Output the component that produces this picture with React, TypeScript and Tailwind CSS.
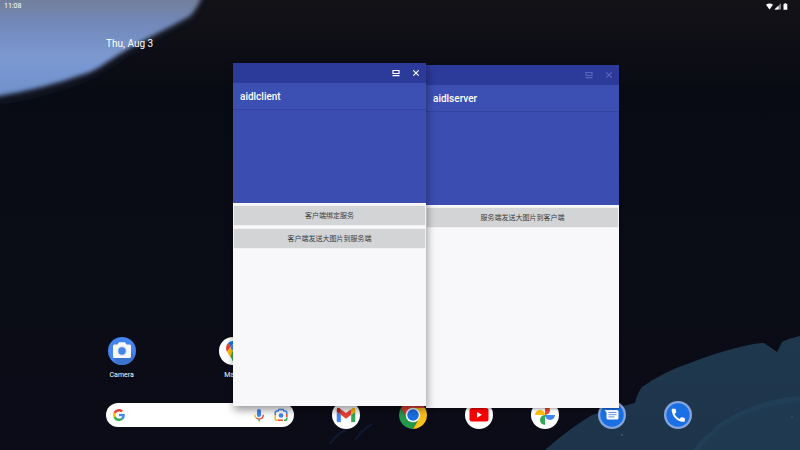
import type { ReactNode } from "react";

function Wallpaper() {
  return (
    <svg
      className="absolute inset-0 h-full w-full"
      viewBox="0 0 800 450"
      preserveAspectRatio="xMidYMid slice"
      aria-hidden="true"
    >
      <defs>
        <linearGradient id="night" x1="0" y1="0" x2="0" y2="1">
          <stop offset="0" stopColor="#131217" />
          <stop offset="0.2" stopColor="#090b14" />
          <stop offset="1" stopColor="#0b0c17" />
        </linearGradient>
        <linearGradient id="petal" x1="0" y1="0" x2="0" y2="1">
          <stop offset="0.1" stopColor="#727c90" />
          <stop offset="0.35" stopColor="#7288b8" />
          <stop offset="0.65" stopColor="#7c99d2" />
          <stop offset="1" stopColor="#6f90cc" />
        </linearGradient>
        <linearGradient id="leaf" x1="0" y1="0" x2="0" y2="1">
          <stop offset="0" stopColor="#20384e" />
          <stop offset="1" stopColor="#1d344a" />
        </linearGradient>
        <filter id="soft" x="-20%" y="-20%" width="140%" height="140%">
          <feGaussianBlur stdDeviation="2" />
        </filter>
        <filter id="wide" x="-20%" y="-20%" width="140%" height="140%">
          <feGaussianBlur stdDeviation="5" />
        </filter>
      </defs>
      <rect width="800" height="450" fill="url(#night)" />
      <path
        d="M-20-20H207Q202 4 190 18Q152 38 127 52Q95 76 60 86Q25 98-20 102Z"
        fill="#1a2233"
        filter="url(#wide)"
      />
      <path
        d="M-20-20H207Q202 3 190 16Q172 26 154 35Q128 48 107 62Q93 72 84 74Q40 90-20 99Z"
        fill="url(#petal)"
        filter="url(#soft)"
      />
      <path
        d="M545 450Q570 428 592 415Q615 408 635 403Q637 394 642 387Q665 371 690 363Q715 353 740 347Q756 343 764 343L777 352L782 342Q790 338 800 336V450Z"
        fill="url(#leaf)"
      />
      <path
        d="M693 450Q700 440 708 434Q722 419 742 411Q765 399 800 396V450Z"
        fill="#203f56"
      />
      <path d="M700 450Q709 434 730 422Q760 405 800 402V450Z" fill="#1f3a50" />
      <path d="M330 444Q336 434 346 430M355 440Q362 430 372 424" stroke="#0f1930" strokeWidth="2" fill="none" />
      <circle cx="622" cy="435" r="1" fill="#34607c" />
      <circle cx="792" cy="417" r="1" fill="#2a4d66" />
    </svg>
  );
}

function StatusBar() {
  return (
    <header className="flex h-3 items-center justify-between pl-1 pr-3 text-[7px] leading-3 text-white">
      <time>11:08</time>
      <svg className="h-[7px] w-[22px]" viewBox="0 0 22 7" fill="#fff" aria-label="Wi-Fi, signal, battery">
        <path d="M0 1.800Q3.500-.8 7 1.800L3.500 6.600Z" />
        <path d="M15 .3V6.600H8.400Z" fillOpacity="0.5" />
        <path d="M12.500 2.800V6.600H8.400Z" />
        <path d="M17.500 .9h1V.2h1.800v.7h1v5.800h-3.800Z" />
      </svg>
    </header>
  );
}

function CameraIcon() {
  return (
    <svg className="h-7 w-7" viewBox="0 0 28 28" aria-hidden="true">
      <circle cx="14" cy="14" r="14" fill="#4384ee" />
      <path d="M6 21L9 27Q14 29 19 27Q24 25 26.500 20L23 14Z" fill="#3a73d0" />
      <path
        d="M6.500 7.500H9.500L11 5.300H17L18.500 7.500H21.500Q23 7.500 23 9V19.500Q23 21 21.500 21H6.500Q5 21 5 19.500V9Q5 7.500 6.500 7.500Z"
        fill="#f7f7f7"
      />
      <circle cx="14" cy="14" r="5" fill="#dfe3ea" />
      <circle cx="14" cy="14" r="3.700" fill="#4384ee" />
    </svg>
  );
}

function MapsIcon() {
  return (
    <svg className="h-7 w-7" viewBox="0 0 28 28" aria-hidden="true">
      <circle cx="14" cy="14" r="14" fill="#fff" />
      <path d="M14 4Q10.800 4 8.800 6.300L12 9.500L16 4.300Q15 4 14 4Z" fill="#1a73e8" />
      <path d="M8.800 6.300Q7 8.200 7 11Q7 13 8 14.700L12 9.500Z" fill="#ea4335" />
      <path d="M16 4.300L11.500 10Q12 13.500 14 13.500L19.500 7Q18 5 16 4.300Z" fill="#4285f4" />
      <path d="M8 14.700Q9.500 17.500 11.500 20L21 11Q21 8.500 19.500 7L14 13.500Q11.500 13.300 11.500 10.500Z" fill="#fbbc04" />
      <path d="M11.500 19.500Q12.800 21.500 13.200 23.500Q14 25 14.800 23.500Q15.500 21 17.500 18.500Q21 14.500 21 11L14 13.500Z" fill="#34a853" />
    </svg>
  );
}

function GmailIcon() {
  return (
    <svg className="h-7 w-7" viewBox="0 0 28 28" aria-hidden="true">
      <circle cx="14" cy="14" r="14" fill="#fff" />
      <svg x="4.500" y="6.500" width="19" height="15" viewBox="52 42 88 66">
        <path fill="#4285f4" d="M58 108h14V74L52 59v43c0 3.320 2.690 6 6 6" />
        <path fill="#34a853" d="M120 108h14c3.320 0 6-2.690 6-6V59l-20 15" />
        <path fill="#fbbc04" d="M120 48v26l20-15v-8c0-7.420-8.470-11.650-14.400-7.200" />
        <path fill="#ea4335" d="M72 74V48l24 18 24-18v26L96 92" />
        <path fill="#c5221f" d="M52 51v8l20 15V48l-5.600-4.200c-5.940-4.450-14.400-.22-14.400 7.200" />
      </svg>
    </svg>
  );
}

function ChromeIcon() {
  return (
    <svg className="h-7 w-7" viewBox="0 0 48 48" aria-hidden="true">
      <path d="M3.220 12A24 24 0 0 1 44.780 12H24A12 12 0 0 0 13.610 30Z" fill="#dd4335" />
      <path d="M3.220 12L13.610 30A12 12 0 0 0 34.390 30L24 48A24 24 0 0 1 3.220 12Z" fill="#239a4b" />
      <path d="M44.780 12H24A12 12 0 0 1 34.390 30L24 48A24 24 0 0 0 44.780 12Z" fill="#fbc116" />
      <circle cx="24" cy="24" r="12.500" fill="#fff" />
      <circle cx="24" cy="24" r="10" fill="#1a6fe6" />
    </svg>
  );
}

function YouTubeIcon() {
  return (
    <svg className="h-7 w-7" viewBox="0 0 28 28" aria-hidden="true">
      <circle cx="14" cy="14" r="14" fill="#fff" />
      <rect x="4.500" y="7" width="19" height="13.500" rx="2.500" fill="#f60002" />
      <path d="M12 10.900V16.700L17 13.800Z" fill="#fff" />
    </svg>
  );
}

function PhotosIcon() {
  return (
    <svg className="h-7 w-7" viewBox="0 0 28 28" aria-hidden="true">
      <circle cx="14" cy="14" r="14" fill="#fff" />
      <path d="M14 14V4A5 5 0 0 1 14 14Z" fill="#ea4335" />
      <path d="M14 14H4A5 5 0 0 1 14 14Z" fill="#fbbc04" />
      <path d="M14 14H24A5 5 0 0 1 14 14Z" fill="#4285f4" />
      <path d="M14 14V24A5 5 0 0 1 14 14Z" fill="#34a853" />
    </svg>
  );
}

function MessagesIcon() {
  return (
    <svg className="h-7 w-7" viewBox="0 0 28 28" aria-hidden="true">
      <circle cx="14" cy="14" r="14" fill="#85a4dc" />
      <circle cx="14" cy="14" r="11.700" fill="#1a6fe4" />
      <path d="M6.500 9H19Q20.500 9 20.500 10.500V17Q20.500 18.500 19 18.500H10Q8.500 18.500 8.500 17V11.500Z" fill="#fff" />
      <path d="M10.500 11.500H18.500M10.500 13.700H18.500M10.500 15.900H16.500" stroke="#5b93ea" strokeWidth="1" />
    </svg>
  );
}

function PhoneIcon() {
  return (
    <svg className="h-7 w-7" viewBox="0 0 28 28" aria-hidden="true">
      <circle cx="14" cy="14" r="14" fill="#85a4dc" />
      <circle cx="14" cy="14" r="11.700" fill="#1a6fe4" />
      <svg x="5.500" y="5.500" width="17.500" height="17.500" viewBox="0 0 24 24">
        <path
          fill="#fff"
          d="M20.010 15.380c-1.230 0-2.420-.2-3.530-.56-.35-.12-.74-.03-1.010.24l-1.570 1.970c-2.830-1.350-5.480-3.900-6.890-6.830l1.950-1.660c.27-.28.35-.67.24-1.020-.37-1.110-.56-2.300-.56-3.530 0-.54-.45-.99-.99-.99H4.190C3.650 3 3 3.240 3 3.990 3 13.280 10.730 21 20.010 21c.71 0 .99-.63.99-1.180v-3.450c0-.54-.45-.99-.99-.99z"
        />
      </svg>
    </svg>
  );
}

function GoogleLogo() {
  return (
    <svg className="h-3 w-3 shrink-0" viewBox="0 0 48 48" aria-hidden="true">
      <path fill="#EA4335" d="M24 9.500c3.540 0 6.710 1.220 9.210 3.600l6.850-6.850C35.900 2.380 30.470 0 24 0 14.620 0 6.510 5.380 2.560 13.220l7.980 6.190C12.430 13.720 17.740 9.500 24 9.500z" />
      <path fill="#4285F4" d="M46.980 24.550c0-1.570-.15-3.090-.38-4.550H24v9.020h12.940c-.58 2.960-2.260 5.480-4.780 7.180l7.730 6c4.510-4.180 7.090-10.360 7.090-17.650z" />
      <path fill="#FBBC05" d="M10.530 28.590c-.48-1.450-.76-2.990-.76-4.590s.27-3.140.76-4.590l-7.980-6.190C.92 16.460 0 20.120 0 24c0 3.880.92 7.540 2.560 10.780l7.970-6.190z" />
      <path fill="#34A853" d="M24 48c6.480 0 11.930-2.130 15.890-5.810l-7.730-6c-2.150 1.450-4.920 2.300-8.160 2.300-6.260 0-11.570-4.220-13.470-9.910l-7.980 6.190C6.510 42.620 14.620 48 24 48z" />
    </svg>
  );
}

function SearchBar() {
  return (
    <form className="flex h-6 w-[188px] items-center rounded-full bg-white pl-[7px] pr-[6px]">
      <GoogleLogo />
      <input type="search" aria-label="Search" className="ml-1 min-w-0 flex-1 bg-transparent text-[8px] text-gray-800 outline-none" />
      <button type="button" aria-label="Voice search">
        <svg className="h-[14px] w-[14px]" viewBox="0 0 14 14" fill="none" aria-hidden="true">
          <rect x="5" y="1" width="4" height="8" rx="2" fill="#4285f4" />
          <path d="M2.900 6.800Q3 9 4.400 10.100" stroke="#fbbc04" strokeWidth="1.300" />
          <path d="M4.400 10.100Q5.700 11.100 7.100 11.100Q11.100 11 11.300 6.800" stroke="#ea4335" strokeWidth="1.300" />
          <path d="M7.100 11V13.400" stroke="#34a853" strokeWidth="1.300" />
        </svg>
      </button>
      <button type="button" aria-label="Lens" className="ml-2">
        <svg className="h-[14px] w-[14px]" viewBox="0 0 14 14" fill="none" strokeWidth="1.500" aria-hidden="true">
          <path d="M1.200 6.500V10.400Q1.200 12.200 3 12.200H4" stroke="#fbbc04" />
          <path d="M4 12.200H9" stroke="#ea4335" />
          <path d="M1.200 7V4.800Q1.200 3 3 3H4L5 1.400H9L10 3H11Q12.800 3 12.800 4.800V6" stroke="#4285f4" />
          <path d="M12.800 6V9" stroke="#ea4335" />
          <path d="M12.800 9.500V10.400Q12.800 12.200 11 12.200H10" stroke="#34a853" />
          <circle cx="7" cy="7.500" r="2.300" fill="#4285f4" />
        </svg>
      </button>
    </form>
  );
}

function AppShortcut({ label, children }: { label: string; children: ReactNode }) {
  return (
    <button type="button" className="flex flex-col items-center gap-[5px] text-[7px] leading-[10px] text-white">
      {children}
      {label}
    </button>
  );
}

function DockApp({ label, children }: { label: string; children: ReactNode }) {
  return (
    <button type="button" aria-label={label} className="h-7 w-7 rounded-full">
      {children}
    </button>
  );
}

type AppWindowProps = {
  title: string;
  actions: string[];
  active?: boolean;
  className: string;
};

function AppWindow({ title, actions, active = false, className }: AppWindowProps) {
  return (
    <section aria-label={title} className={`absolute flex h-[343px] w-[193px] flex-col bg-[#f8f7f9] ${className}`}>
      <div
        className={`flex h-5 shrink-0 items-center justify-end gap-3 bg-[#2c3a9a] pr-[6px] ${active ? "text-white" : "text-[#5965b8]"}`}
      >
        <button type="button" aria-label={`Minimize ${title}`}>
          <svg className="h-2 w-2" viewBox="0 0 8 8" fill="none" stroke="currentColor" aria-hidden="true">
            <path d="M1 1.500H7V4.500H1ZM.5 6.700H7.500" strokeWidth="1.200" />
          </svg>
        </button>
        <button type="button" aria-label={`Close ${title}`}>
          <svg className="h-2 w-2" viewBox="0 0 8 8" fill="none" stroke="currentColor" strokeWidth="1.200" aria-hidden="true">
            <path d="M1.300 1.300L6.700 6.700M6.700 1.300L1.300 6.700" />
          </svg>
        </button>
      </div>
      <h2 className="flex h-[27px] shrink-0 items-center border-b border-[#3343a0] bg-[#3c4fb2] px-[7px] pt-[2px] text-[10px] font-medium leading-3 text-white">
        {title}
      </h2>
      <div className="h-[93px] shrink-0 bg-[#3b4db0]" />
      <div className="flex flex-col gap-1 px-px pt-[3px]">
        {actions.map((action) => (
          <button
            key={action}
            type="button"
            className="h-[19px] rounded-[1px] bg-[#d3d4d6] pt-px text-[7px] text-[#3c3c3c] shadow-[0_0_1px_#b8b8b8]"
          >
            {action}
          </button>
        ))}
      </div>
    </section>
  );
}

export default function App() {
  return (
    <div className="relative flex min-h-screen flex-col overflow-hidden bg-[#0a0b15] font-[Roboto,'Noto_Sans_CJK_SC',sans-serif]">
      <Wallpaper />
      <div className="relative flex flex-1 flex-col">
        <StatusBar />
        <p className="mt-[26px] px-[106px] text-[10px] leading-3 text-white">Thu, Aug 3</p>
        <main className="mt-auto grid grid-cols-6 px-[66px]">
          <AppShortcut label="Camera">
            <CameraIcon />
          </AppShortcut>
          <AppShortcut label="Maps">
            <MapsIcon />
          </AppShortcut>
        </main>
        <nav aria-label="Dock" className="mb-[21px] mt-[21px] flex items-center justify-between pl-[106px] pr-[108px]">
          <SearchBar />
          <DockApp label="Gmail">
            <GmailIcon />
          </DockApp>
          <DockApp label="Chrome">
            <ChromeIcon />
          </DockApp>
          <DockApp label="YouTube">
            <YouTubeIcon />
          </DockApp>
          <DockApp label="Photos">
            <PhotosIcon />
          </DockApp>
          <DockApp label="Messages">
            <MessagesIcon />
          </DockApp>
          <DockApp label="Phone">
            <PhoneIcon />
          </DockApp>
        </nav>
      </div>
      <AppWindow
        title="aidlserver"
        actions={["服务端发送大图片到客户端"]}
        className="left-[426px] top-[65px] shadow-[0_1px_3px_#0006]"
      />
      <AppWindow
        title="aidlclient"
        active
        actions={["客户端绑定服务", "客户端发送大图片到服务端"]}
        className="left-[233px] top-[63px] shadow-[1px_4px_8px_#0006]"
      />
    </div>
  );
}
